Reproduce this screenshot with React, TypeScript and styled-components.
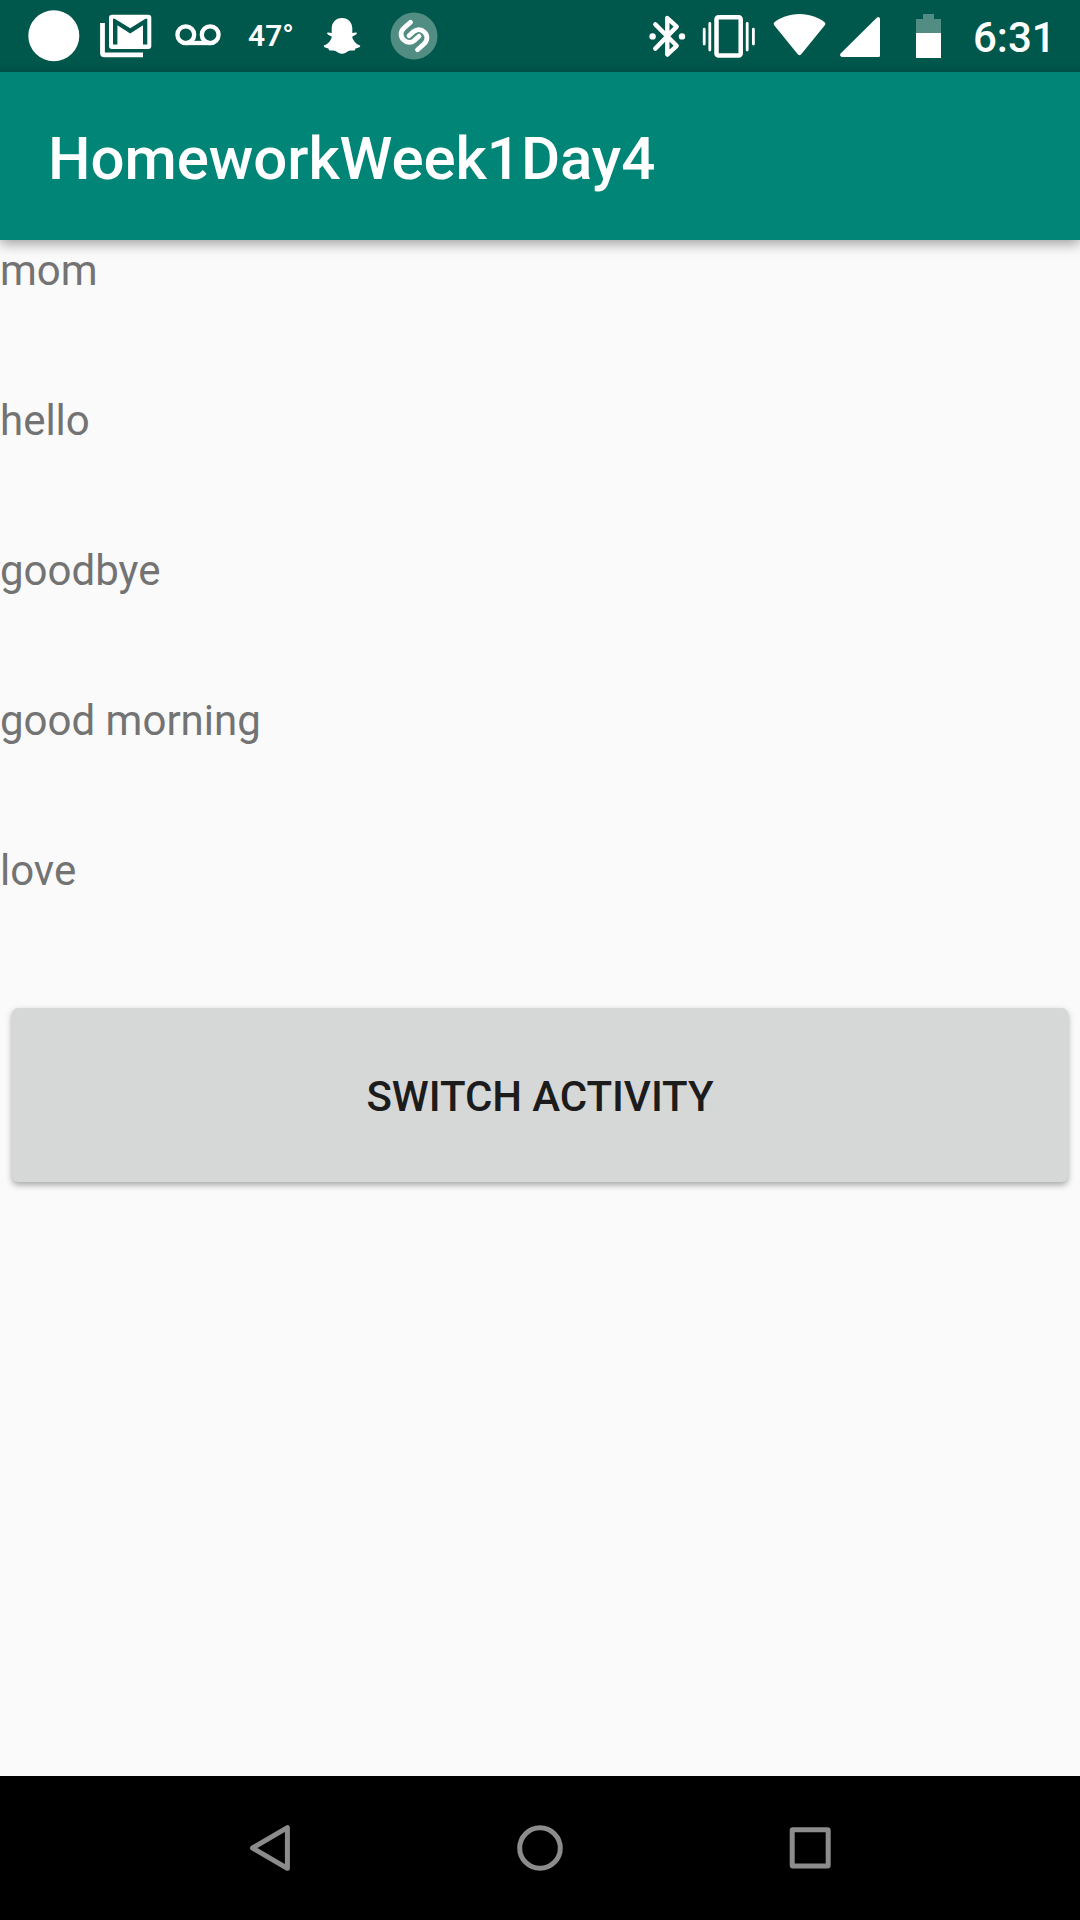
import React from "react";
import styled, { createGlobalStyle } from "styled-components";

const GlobalStyle = createGlobalStyle`
  body {
    margin: 0;
    background: #fafafa;
  }
  *, *::before, *::after {
    box-sizing: border-box;
  }
`;

const Screen = styled.div`
  display: flex;
  flex-direction: column;
  width: 1080px;
  height: 1920px;
  overflow: hidden;
  background: #fafafa;
  font-family: Roboto, "Noto Sans", sans-serif;
`;

const StatusBar = styled.div`
  display: flex;
  justify-content: space-between;
  height: 72px;
  flex: none;
  padding-left: 18px;
  background: #00574b;
  color: #fff;
`;

const Notifications = styled.div`
  display: grid;
  grid-template-columns: repeat(6, 72px);
`;

const SystemIcons = styled.div`
  display: flex;
  width: 432px;
`;

const StatusIcon = styled.svg<{ $gap?: number }>`
  display: block;
  flex: none;
  height: 72px;
  margin-left: ${(p) => p.$gap ?? 0}px;
`;

const Temperature = styled.span`
  padding-left: 14px;
  font-size: 30px;
  font-weight: 600;
  line-height: 72px;
`;

const Clock = styled.span`
  padding-left: 32px;
  font-size: 42px;
  font-weight: 500;
  line-height: 76px;
`;

const AppBar = styled.header`
  display: flex;
  align-items: center;
  flex: none;
  height: 168px;
  padding: 6px 48px 0;
  background: #008577;
  box-shadow: 0 4px 12px rgba(0, 0, 0, 0.36);
  z-index: 1;
`;

const Title = styled.h1`
  margin: 0;
  color: #fff;
  font-size: 60px;
  font-weight: 500;
  letter-spacing: -0.06px;
  line-height: 80px;
`;

const Content = styled.main`
  display: flex;
  flex-direction: column;
  flex: 1;
`;

const Row = styled.div`
  height: 150px;
  flex: none;
  color: #737373;
  font-size: 42px;
  line-height: 61px;
`;

const SwitchButton = styled.button`
  height: 174px;
  margin: 18px 12px;
  padding: 2px 0 0;
  border: 0;
  border-radius: 6px;
  background: #d6d8d7;
  box-shadow: 0 3px 6px rgba(0, 0, 0, 0.34);
  color: #1c1c1c;
  font-family: inherit;
  font-size: 42px;
  font-weight: 500;
  letter-spacing: -0.08px;
  text-transform: uppercase;
`;

const NavBar = styled.nav`
  display: grid;
  grid-template-columns: repeat(3, 270px);
  place-content: center;
  place-items: center;
  height: 144px;
  flex: none;
  background: #000;
`;

const NavIcon = styled.svg`
  display: block;
  width: 48px;
  height: 48px;
  fill: none;
  stroke: #8c8c8c;
  stroke-width: 5;
  stroke-linejoin: round;
`;

const words = ["mom", "hello", "goodbye", "good morning", "love"];

const Dot = () => (
  <StatusIcon width="72" viewBox="0 0 72 72">
    <circle cx="35.8" cy="35.7" r="25.5" fill="#fff" />
  </StatusIcon>
);

const Mail = () => (
  <StatusIcon width="72" viewBox="0 0 72 72">
    <path d="M12.5 23V53Q12.5 54.9 14.4 54.9H53" fill="none" stroke="#fff" strokeWidth="4.8" />
    <rect x="19" y="14.7" width="42.3" height="34.4" rx="3" fill="#fff" />
    <path d="M23 18.7H24.7L40.2 28.2L55.5 18.7H57.3V44.5H53V25.2L40.2 33.6L27.4 25.2V44.5H23Z" fill="#00574b" />
  </StatusIcon>
);

const Voicemail = () => (
  <StatusIcon width="72" viewBox="0 0 72 72">
    <g fill="none" stroke="#fff" strokeWidth="4.3">
      <circle cx="23.8" cy="34.7" r="8.4" />
      <circle cx="48.2" cy="34.7" r="8.4" />
      <path d="M23.8 43H48.2" />
    </g>
  </StatusIcon>
);

const Ghost = () => (
  <StatusIcon width="72" viewBox="0 0 72 72">
    <path
      fill="#fff"
      d="M36 18C42.5 18 46 22.5 46.3 28V33C48 33 49.5 32 50.8 32.8C51.3 34.5 48 35.6 46.8 36.3C46 37 46.3 38 47 39.3C49 43 51.5 44.7 54.2 45.5C54.4 47.5 51.5 48 50 48.3C49 48.6 49.4 50.3 48.4 50.6C46 50.5 44 50 42.3 51C40.5 52.3 39 53.7 36 53.7C33 53.7 31.5 52.3 29.7 51C28 50 26 50.5 23.6 50.6C22.6 50.3 23 48.6 22 48.3C20.5 48 17.6 47.5 17.8 45.5C20.5 44.7 23 43 25 39.3C25.7 38 26 37 25.2 36.3C24 35.6 20.7 34.5 21.2 32.8C22.5 32 24 33 25.7 33V28C26 22.5 29.5 18 36 18Z"
    />
  </StatusIcon>
);

const MusicMatch = () => (
  <StatusIcon width="72" viewBox="0 0 72 72">
    <circle cx="36" cy="36" r="23.5" fill="#fff" fillOpacity="0.32" />
    <g fill="none" stroke="#fff" strokeWidth="4.8" strokeLinecap="round">
      <path d="M32.5 22.3L26 28C22.2 31.5 22.2 36.5 25.5 39.8C29 43.2 33.2 43 36.5 40.3L41 36.3" />
      <path d="M39.5 49.7L46 44C49.8 40.5 49.8 35.5 46.5 32.2C43 28.8 38.8 29 35.5 31.7L31 35.7" />
    </g>
  </StatusIcon>
);

const Bluetooth = () => (
  <StatusIcon width="38" viewBox="0 0 38 72">
    <path
      d="M7.3 24.4L28.7 45.8L19.3 54.6V18L28.7 26.6L7.3 48.6"
      fill="none"
      stroke="#fff"
      strokeWidth="4.4"
      strokeLinecap="round"
      strokeLinejoin="round"
    />
    <circle cx="4.6" cy="36.4" r="3.2" fill="#fff" />
    <circle cx="34" cy="36.4" r="3.2" fill="#fff" />
  </StatusIcon>
);

const Vibrate = () => (
  <StatusIcon width="53" viewBox="0 0 53 72" $gap={16}>
    <rect x="14.5" y="17.2" width="24.2" height="38.4" rx="2" fill="none" stroke="#fff" strokeWidth="4.5" />
    <path
      d="M2.2 29.2V44M7.8 23.3V50M45.2 23.3V50M51.4 29.2V44"
      fill="none"
      stroke="#fff"
      strokeWidth="2.8"
      strokeLinecap="round"
    />
  </StatusIcon>
);

const Wifi = () => (
  <StatusIcon width="53" viewBox="0 0 53 72" $gap={18}>
    <path
      fill="#fff"
      d="M26.5 14C16 14 7 17.8 1.5 22.2Q0 23.5 1 25L25 54.4Q26.5 56 28 54.4L52 25Q53 23.5 51.5 22.2C46 17.8 37 14 26.5 14Z"
    />
  </StatusIcon>
);

const Signal = () => (
  <StatusIcon width="40" viewBox="0 0 40 72" $gap={14}>
    <path fill="#fff" d="M40 18.4V55.5Q40 57 38.5 57H1.6Q-0.8 55.6 0.6 53.4L37 17.4Q39.2 16 40 18.4Z" />
  </StatusIcon>
);

const Battery = () => (
  <StatusIcon width="25" viewBox="0 0 25 72" $gap={36}>
    <path fill="#fff" fillOpacity="0.32" d="M7 14H18V19H25V33H0V19H7Z" />
    <path fill="#fff" d="M0 33H25V58H0Z" />
  </StatusIcon>
);

export default function App() {
  return (
    <>
      <GlobalStyle />
      <Screen>
        <StatusBar>
          <Notifications>
            <Dot />
            <Mail />
            <Voicemail />
            <Temperature>47°</Temperature>
            <Ghost />
            <MusicMatch />
          </Notifications>
          <SystemIcons>
            <Bluetooth />
            <Vibrate />
            <Wifi />
            <Signal />
            <Battery />
            <Clock>6:31</Clock>
          </SystemIcons>
        </StatusBar>
        <AppBar>
          <Title>HomeworkWeek1Day4</Title>
        </AppBar>
        <Content>
          {words.map((word) => (
            <Row key={word}>{word}</Row>
          ))}
          <SwitchButton type="button">Switch Activity</SwitchButton>
        </Content>
        <NavBar>
          <NavIcon viewBox="0 0 48 48">
            <path d="M6.6 24L41.4 3.7V44.3Z" />
          </NavIcon>
          <NavIcon viewBox="0 0 48 48">
            <circle cx="24" cy="24" r="20.3" />
          </NavIcon>
          <NavIcon viewBox="0 0 48 48">
            <rect x="6.2" y="5.8" width="36" height="36.2" rx="0.8" />
          </NavIcon>
        </NavBar>
      </Screen>
    </>
  );
}
